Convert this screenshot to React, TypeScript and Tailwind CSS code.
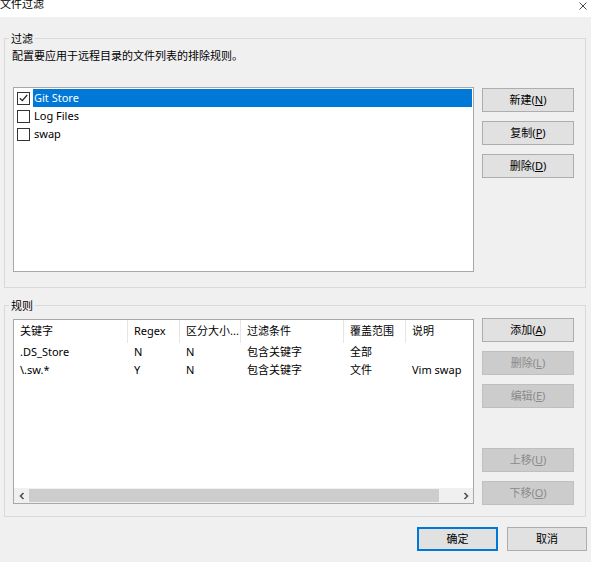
import React from "react";

const font = { fontFamily: '"Noto Sans", "Noto Sans CJK SC", sans-serif' };

function Btn({ children, disabled, w = "w-[92px]" }: { children: React.ReactNode; disabled?: boolean; w?: string }) {
  return (
    <div
      className={`${w} h-[24px] flex items-center justify-center text-[11px] border ${
        disabled ? "bg-[#cccccc] border-[#bfbfbf] text-[#8a8a8a]" : "bg-[#e1e1e1] border-[#adadad] text-black"
      }`}
    >
      {children}
    </div>
  );
}

function Mn({ label, k }: { label: string; k: string }) {
  return (
    <span>
      {label}(<span className="underline">{k}</span>)
    </span>
  );
}

function Check({ checked }: { checked?: boolean }) {
  return (
    <div className="w-[13px] h-[13px] border border-[#333333] bg-white flex items-center justify-center shrink-0">
      {checked && (
        <svg width="9" height="8" viewBox="0 0 9 8">
          <path d="M0.8 4.2 L3.3 6.6 L8.2 1" stroke="#222" strokeWidth="1.2" fill="none" />
        </svg>
      )}
    </div>
  );
}

const cols = [
  { w: "w-[114px]", h: "关键字" },
  { w: "w-[52px]", h: "Regex" },
  { w: "w-[61px]", h: "区分大小..." },
  { w: "w-[103px]", h: "过滤条件" },
  { w: "w-[62px]", h: "覆盖范围" },
  { w: "flex-1", h: "说明" },
];

const rows = [
  [".DS_Store", "N", "N", "包含关键字", "全部", ""],
  ["\\.sw.*", "Y", "N", "包含关键字", "文件", "Vim swap"],
];

export default function App() {
  return (
    <div className="w-[591px] h-[562px] bg-[#f0f0f0] overflow-hidden text-[11px] text-black" style={font}>
      {/* title bar */}
      <div className="h-[17px] bg-white flex justify-between overflow-hidden">
        <div className="text-[11px] leading-[13px] -mt-[3px]">文件过滤</div>
        <svg width="8" height="8" viewBox="0 0 8 8" className="mt-[2px] mr-[4px]">
          <path d="M0.5 0.5 L7.5 7.5 M7.5 0.5 L0.5 7.5" stroke="#333" strokeWidth="0.9" />
        </svg>
      </div>

      {/* group 1 */}
      <div className="relative ml-[4px] mt-[21px] w-[582px] h-[250px] border border-[#d9d9d9]">
        <div className="absolute left-[4px] -top-[7px] px-[2px] bg-[#f0f0f0] leading-[13px]">过滤</div>
        <div className="mt-[10px] ml-[7px] h-[13px] leading-[13px]">配置要应用于远程目录的文件列表的排除规则。</div>
        <div className="flex mt-[25px] ml-[8px]">
          <div className="w-[461px] h-[185px] border border-[#a8a8a8] bg-white pt-[1px]">
            {[
              { t: "Git Store", c: true, s: true },
              { t: "Log Files" },
              { t: "swap" },
            ].map((r) => (
              <div key={r.t} className="h-[18px] flex items-center pl-[3px]">
                <Check checked={r.c} />
                <div
                  className={`ml-[3px] h-[18px] flex items-center pl-[1px] ${
                    r.s ? "flex-1 mr-[1px] bg-[#0078d7] text-white" : ""
                  }`}
                >
                  {r.t}
                </div>
              </div>
            ))}
          </div>
          <div className="ml-[8px] mt-[1px] flex flex-col gap-[9px]">
            <Btn><Mn label="新建" k="N" /></Btn>
            <Btn><Mn label="复制" k="P" /></Btn>
            <Btn><Mn label="删除" k="D" /></Btn>
          </div>
        </div>
      </div>

      {/* group 2 */}
      <div className="relative ml-[4px] mt-[17px] w-[582px] h-[212px] border border-[#d9d9d9]">
        <div className="absolute left-[4px] -top-[7px] px-[2px] bg-[#f0f0f0] leading-[13px]">规则</div>
        <div className="flex mt-[13px] ml-[8px]">
          <div className="w-[461px] h-[185px] border border-[#a8a8a8] bg-white flex flex-col">
            <div className="h-[23px] flex">
              {cols.map((c, i) => (
                <div
                  key={i}
                  className={`${c.w} h-full flex items-center pl-[6px] ${i < 5 ? "border-r border-[#e5e5e5]" : ""}`}
                >
                  {c.h}
                </div>
              ))}
            </div>
            {rows.map((r, ri) => (
              <div key={ri} className="h-[18px] flex">
                {r.map((v, i) => (
                  <div key={i} className={`${cols[i].w} h-full flex items-center pl-[6px] ${i < 5 ? "pr-[1px]" : ""}`}>
                    {v}
                  </div>
                ))}
              </div>
            ))}
            <div className="flex-1" />
            <div className="h-[15px] bg-[#f0f0f0] flex items-center">
              <div className="w-[15px] h-full flex items-center justify-center">
                <svg width="6" height="8" viewBox="0 0 6 8">
                  <path d="M4.5 1 L1.5 4 L4.5 7" stroke="#505050" strokeWidth="1.6" fill="none" />
                </svg>
              </div>
              <div className="w-[410px] h-[13px] bg-[#cdcdcd]" />
              <div className="flex-1" />
              <div className="w-[15px] h-full flex items-center justify-center">
                <svg width="6" height="8" viewBox="0 0 6 8">
                  <path d="M1.5 1 L4.5 4 L1.5 7" stroke="#505050" strokeWidth="1.6" fill="none" />
                </svg>
              </div>
            </div>
          </div>
          <div className="ml-[8px] -mt-[1px] flex flex-col">
            <Btn><Mn label="添加" k="A" /></Btn>
            <div className="mt-[9px]"><Btn disabled><Mn label="删除" k="L" /></Btn></div>
            <div className="mt-[9px]"><Btn disabled><Mn label="编辑" k="E" /></Btn></div>
            <div className="mt-[40px]"><Btn disabled><Mn label="上移" k="U" /></Btn></div>
            <div className="mt-[9px]"><Btn disabled><Mn label="下移" k="O" /></Btn></div>
          </div>
        </div>
      </div>

      {/* bottom buttons */}
      <div className="flex mt-[10px] ml-[417px] gap-[9px]">
        <div className="w-[81px] h-[24px] flex items-center justify-center border-2 border-[#0078d7] bg-[#e1e1e1]">确定</div>
        <div className="w-[80px] h-[24px] flex items-center justify-center border border-[#adadad] bg-[#e1e1e1]">取消</div>
      </div>
    </div>
  );
}
